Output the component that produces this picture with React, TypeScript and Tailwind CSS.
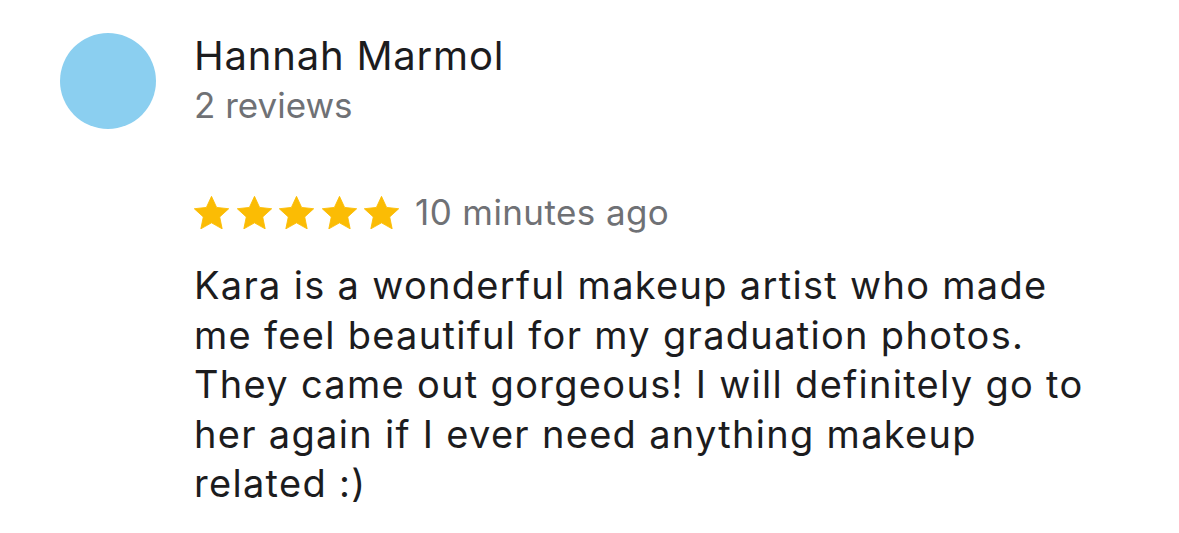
import React from "react";

function Star() {
  return (
    <svg width="35" height="33" viewBox="2 2 20 19" className="shrink-0">
      <path
        d="M12 2.2l2.95 6.36 6.95.78-5.17 4.72 1.42 6.86L12 17.46l-6.15 3.46 1.42-6.86L2.1 9.34l6.95-.78z"
        fill="#FBBC04"
        strokeLinejoin="round"
        stroke="#FBBC04"
        strokeWidth="0.5"
      />
    </svg>
  );
}

export default function App() {
  return (
    <div
      className="w-[1179px] h-[533px] bg-white overflow-hidden flex pl-[60px] pt-[33px]"
      style={{ fontFamily: "Inter, 'Noto Sans', sans-serif" }}
    >
      <div className="w-[96px] h-[96px] rounded-full bg-[#8BCFF0] shrink-0" />
      <div className="ml-[38px] flex flex-col">
        <div className="text-[40px] leading-[48px] tracking-[0.8px] text-[#1c1c1e] -mt-[1px]">Hannah Marmol</div>
        <div className="text-[35px] leading-[42px] text-[#6f7175] mt-[4px]">2 reviews</div>
        <div className="flex items-center mt-[65px] h-[42px]">
          <div className="flex gap-[7.5px]">
            <Star />
            <Star />
            <Star />
            <Star />
            <Star />
          </div>
          <div className="ml-[16px] text-[35px] leading-[42px] tracking-[0.4px] text-[#6f7175]">10 minutes ago</div>
        </div>
        <div className="mt-[28px] w-[900px] text-[38px] leading-[49.5px] tracking-[1.3px] text-[#1c1c1e]">
          Kara is a wonderful makeup artist who made me feel beautiful for my graduation photos. They came out gorgeous! I will definitely go to her again if I ever need anything makeup related :)
        </div>
      </div>
    </div>
  );
}
